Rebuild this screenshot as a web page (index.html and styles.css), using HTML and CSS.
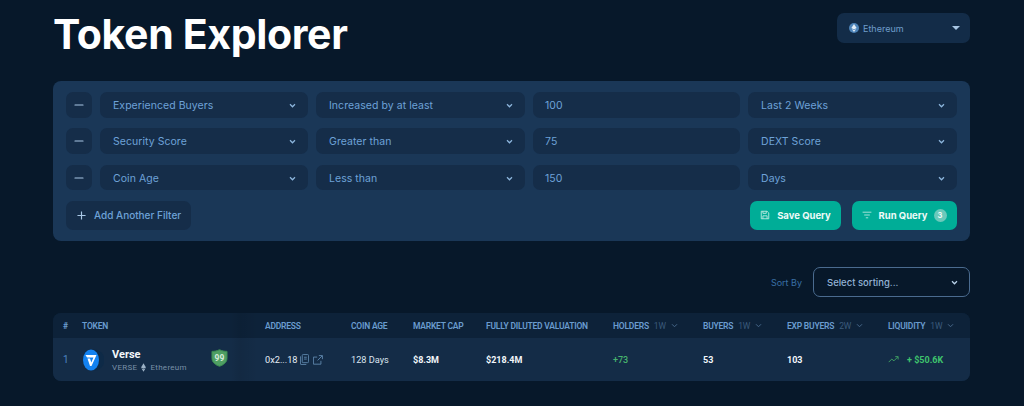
FILE: index.html
```html
<!DOCTYPE html>
<html lang="en">
<head>
<meta charset="utf-8">
<title>Token Explorer</title>
<link rel="stylesheet" href="styles.css">
</head>
<body>
<main class="page">
  <header class="top">
    <h1>Token Explorer</h1>
    <div class="chain">
      <svg class="eth" viewBox="0 0 10 10" width="10" height="10"><circle cx="5" cy="5" r="5" fill="#4d83b8"/><path d="M5 1 7.600 5 5 6.500 2.400 5Z" fill="#e4eef7"/><path d="M5 7.200 7.200 5.900 5 9 2.800 5.900Z" fill="#e4eef7"/></svg>
      <span class="chain-name">Ethereum</span>
      <span class="caret"></span>
    </div>
  </header>

  <section class="filters">
    <div class="row">
      <button class="minus"><svg viewBox="0 0 10 2" width="10" height="2"><path d="M1 1h8" stroke="#a9c8e6" stroke-width="1.200" stroke-linecap="round"/></svg></button>
      <div class="field sel"><span>Experienced Buyers</span><svg class="chev" viewBox="0 0 8 6" width="7" height="5"><path d="M1 1.500 4 4.500 7 1.500" fill="none" stroke="#8db6dd" stroke-width="1.500"/></svg></div>
      <div class="field sel"><span>Increased by at least</span><svg class="chev" viewBox="0 0 8 6" width="7" height="5"><path d="M1 1.500 4 4.500 7 1.500" fill="none" stroke="#8db6dd" stroke-width="1.500"/></svg></div>
      <div class="field num"><span>100</span></div>
      <div class="field sel"><span>Last 2 Weeks</span><svg class="chev" viewBox="0 0 8 6" width="7" height="5"><path d="M1 1.500 4 4.500 7 1.500" fill="none" stroke="#8db6dd" stroke-width="1.500"/></svg></div>
    </div>
    <div class="row">
      <button class="minus"><svg viewBox="0 0 10 2" width="10" height="2"><path d="M1 1h8" stroke="#a9c8e6" stroke-width="1.200" stroke-linecap="round"/></svg></button>
      <div class="field sel"><span>Security Score</span><svg class="chev" viewBox="0 0 8 6" width="7" height="5"><path d="M1 1.500 4 4.500 7 1.500" fill="none" stroke="#8db6dd" stroke-width="1.500"/></svg></div>
      <div class="field sel"><span>Greater than</span><svg class="chev" viewBox="0 0 8 6" width="7" height="5"><path d="M1 1.500 4 4.500 7 1.500" fill="none" stroke="#8db6dd" stroke-width="1.500"/></svg></div>
      <div class="field num"><span>75</span></div>
      <div class="field sel"><span>DEXT Score</span><svg class="chev" viewBox="0 0 8 6" width="7" height="5"><path d="M1 1.500 4 4.500 7 1.500" fill="none" stroke="#8db6dd" stroke-width="1.500"/></svg></div>
    </div>
    <div class="row">
      <button class="minus"><svg viewBox="0 0 10 2" width="10" height="2"><path d="M1 1h8" stroke="#a9c8e6" stroke-width="1.200" stroke-linecap="round"/></svg></button>
      <div class="field sel"><span>Coin Age</span><svg class="chev" viewBox="0 0 8 6" width="7" height="5"><path d="M1 1.500 4 4.500 7 1.500" fill="none" stroke="#8db6dd" stroke-width="1.500"/></svg></div>
      <div class="field sel"><span>Less than</span><svg class="chev" viewBox="0 0 8 6" width="7" height="5"><path d="M1 1.500 4 4.500 7 1.500" fill="none" stroke="#8db6dd" stroke-width="1.500"/></svg></div>
      <div class="field num"><span>150</span></div>
      <div class="field sel"><span>Days</span><svg class="chev" viewBox="0 0 8 6" width="7" height="5"><path d="M1 1.500 4 4.500 7 1.500" fill="none" stroke="#8db6dd" stroke-width="1.500"/></svg></div>
    </div>
    <div class="actions">
      <button class="add"><svg viewBox="0 0 10 10" width="9" height="9"><path d="M5 .5v9M.5 5h9" stroke="#a9c8e6" stroke-width="1.300"/></svg><span>Add Another Filter</span></button>
      <div class="buttons">
        <button class="cta save"><svg viewBox="0 0 12 12" width="10" height="10" fill="none" stroke="#cdeee7" stroke-width="1"><path d="M1.500 1.500h7l2 2v7h-9z"/><path d="M3.500 1.500v2.500h4v-2.500M3.500 10.500v-3.500h5v3.500"/></svg><span>Save Query</span></button>
        <button class="cta run"><svg viewBox="0 0 12 10" width="10" height="8" fill="none" stroke="#cdeee7" stroke-width="1"><path d="M.5 1.500h11M2.500 5h7M4.500 8.500h3"/></svg><span>Run Query</span><span class="badge">3</span></button>
      </div>
    </div>
  </section>

  <div class="sort">
    <span class="sort-label">Sort By</span>
    <div class="sort-box"><span>Select sorting...</span><svg viewBox="0 0 8 6" width="7" height="5"><path d="M1 1.500 4 4.500 7 1.500" fill="none" stroke="#b9d2ea" stroke-width="1.500"/></svg></div>
  </div>

  <section class="table">
    <div class="grid head">
      <span class="hash">#</span>
      <span>TOKEN</span>
      <span>ADDRESS</span>
      <span>COIN AGE</span>
      <span>MARKET CAP</span>
      <span>FULLY DILUTED VALUATION</span>
      <span class="hcell">HOLDERS <i>1W</i><svg viewBox="0 0 8 6" width="7" height="5"><path d="M1 1.500 4 4.500 7 1.500" fill="none" stroke="#47688a" stroke-width="1.200"/></svg></span>
      <span class="hcell">BUYERS <i>1W</i><svg viewBox="0 0 8 6" width="7" height="5"><path d="M1 1.500 4 4.500 7 1.500" fill="none" stroke="#47688a" stroke-width="1.200"/></svg></span>
      <span class="hcell">EXP BUYERS <i>2W</i><svg viewBox="0 0 8 6" width="7" height="5"><path d="M1 1.500 4 4.500 7 1.500" fill="none" stroke="#47688a" stroke-width="1.200"/></svg></span>
      <span class="hcell">LIQUIDITY <i>1W</i><svg viewBox="0 0 8 6" width="7" height="5"><path d="M1 1.500 4 4.500 7 1.500" fill="none" stroke="#47688a" stroke-width="1.200"/></svg></span>
    </div>
    <div class="grid body">
      <span class="rank">1</span>
      <div class="token">
        <svg class="logo" viewBox="0 0 22 22" width="22" height="22"><circle cx="12" cy="11" r="10.500" fill="#0e2a47"/><ellipse cx="9" cy="11" rx="8" ry="10.500" fill="#1482f0"/><path d="M3.500 6 14.500 6 9.500 17 8 17 5.500 9.500 8 9.500 9.300 13.500 11.500 8.500 5 8.500Z" fill="#fff"/></svg>
        <div class="token-text">
          <strong>Verse</strong>
          <span class="sub">VERSE <svg viewBox="0 0 6 10" width="5" height="9"><path d="M3 0 6 5 3 6.600 0 5Z" fill="#9db2c6"/><path d="M3 7.200 5.600 5.800 3 10 .4 5.800Z" fill="#9db2c6"/></svg> Ethereum</span>
        </div>
        <div class="shield"><svg viewBox="0 0 18 19" width="17" height="18"><path d="M1 2.500C4 2.500 6.500 1.800 9 .7 11.500 1.800 14 2.500 17 2.500V10C17 14 13 17 9 18.300 5 17 1 14 1 10Z" fill="#4f9f63" stroke="#3a8a52"/></svg><span>99</span></div>
      </div>
      <div class="addr">0x2...18
        <svg viewBox="0 0 10 12" width="9" height="11" fill="none" stroke="#5e87ad" stroke-width="1"><rect x="2.500" y=".5" width="7" height="9" rx="1"/><path d="M.5 2.500v8.500a.5.5 0 0 0 .5.5h6"/><path d="M4.500 3.500h3M4.500 5.500h3"/></svg>
        <svg class="ext" viewBox="0 0 12 12" width="10" height="10" fill="none" stroke="#5e87ad" stroke-width="1.100"><path d="M9.500 7v4h-9V2.500H5M7 .7h4.300V5M11 1 5.500 6.500"/></svg>
      </div>
      <span class="plain">128 Days</span>
      <strong>$8.3M</strong>
      <strong>$218.4M</strong>
      <span class="green">+73</span>
      <strong>53</strong>
      <strong>103</strong>
      <div class="liq">
        <svg viewBox="0 0 12 8" width="11" height="7" fill="none" stroke="#3f9f63" stroke-width="1.100"><path d="M.5 7 4 3.500 6.500 5.500 11 1M8 .7h3.300V4"/></svg>
        <span class="green-strong">+ $50.6K</span>
      </div>
    </div>
  </section>
</main>
</body>
</html>
```

FILE: styles.css
```css
* { box-sizing: border-box; }
html, body { margin: 0; height: 100%; }
body {
  background: #07182a;
  font-family: "Inter", "Liberation Sans", sans-serif;
  color: #6fa0d4;
  overflow: hidden;
}
button { font: inherit; border: 0; color: inherit; padding: 0; }
.page { width: 917px; margin-left: 53px; }

.top { display: flex; justify-content: space-between; height: 81px; }
h1 { margin: 9px 0 0; font-size: 41px; line-height: 50px; font-weight: 700; color: #fff; letter-spacing: -.35px; }
.chain {
  margin-top: 13px; width: 133px; height: 30px; border-radius: 7px;
  background: #132c48; display: flex; align-items: center; padding: 0 10px 0 12px; font-size: 9px; color: #6f9dcb;
}
.eth { margin-right: 4px; }
.chain-name { flex: 1; }
.caret { width: 0; height: 0; border-left: 4px solid transparent; border-right: 4px solid transparent; border-top: 4px solid #a8c6e4; }

.filters {
  background: #1a3757; border-radius: 8px; height: 160px; padding: 11px 13px;
  display: flex; flex-direction: column; gap: 10.500px;
}
.row { display: grid; grid-template-columns: 26px 208px 209px 207px 209px; gap: 8px; height: 26px; }
.minus { background: #152d49; border-radius: 7px; display: flex; align-items: center; justify-content: center; }
.field {
  background: #152d49; border-radius: 7px; display: flex; align-items: center;
  justify-content: space-between; font-size: 10.500px; letter-spacing: .05px; color: #6ea2d8; padding-top: 1px;
}
.sel { padding-right: 12px; padding-left: 13px; }
.num { padding-right: 12px; padding-left: 12px; }
.actions { display: flex; justify-content: space-between; align-items: flex-start; }
.add {
  width: 125px; height: 29px; background: #152d49; border-radius: 7px; display: flex; align-items: center;
  gap: 8px; padding-left: 11px; font-size: 10px; font-weight: 500; color: #6ea2d8;
}
.buttons { display: flex; gap: 11px; }
.cta {
  height: 29px; border-radius: 7px; background: #00ad97; color: #eefaf7; display: flex; align-items: center;
  justify-content: center; font-size: 9.500px; font-weight: 700;
}
.save { width: 91px; gap: 7px; }
.run { width: 105px; gap: 6px; }
.badge { width: 13px; height: 13px; border-radius: 50%; background: #6cc9bb; font-size: 7.500px; display: flex; align-items: center; justify-content: center; }

.sort { display: flex; justify-content: flex-end; align-items: center; gap: 11px; margin-top: 26px; height: 30px; }
.sort-label { font-size: 9px; color: #3a6fa5; }
.sort-box {
  width: 157px; height: 30px; border: 1px solid #4a6b8f; border-radius: 7px; display: flex; align-items: center;
  justify-content: space-between; padding: 0 11px 0 13px; font-size: 9.500px; font-weight: 500; color: #94b4d6;
}

.table { margin-top: 16px; border-radius: 8px; overflow: hidden; background: #0d2038; font-family: "Roboto", "Liberation Sans", sans-serif; }
.grid {
  display: grid; grid-template-columns: 19px 183px 86px 62px 73px 127px 90px 84px 101px 82px; align-items: center; padding-left: 10px;
  background-image: linear-gradient(90deg, transparent 178px, rgba(0,0,0,.07) 187px, transparent 205px);
}
.head { height: 25px; background-color: #0d2239; font-size: 8.500px; letter-spacing: -.22px; font-weight: 600; color: #6a9ccf; }
.hash { font-weight: 700; }
.hcell { display: flex; align-items: center; gap: 4px; }
.hcell i { font-style: normal; font-weight: 400; color: #3b5a7b; margin-left: 1px; }
.hcell svg { margin-left: 1px; }
.body { height: 43px; background-color: #142c47; font-size: 9px; color: #e7eef6; }
.body strong { font-weight: 700; color: #f2f6fa; }
.rank { color: #4d86c2; font-size: 10px; }
.token { display: flex; align-items: center; position: relative; }
.logo { margin-right: 8px; }
.token-text { display: flex; flex-direction: column; gap: 2px; }
.token-text strong { font-size: 11px; }
.sub { display: flex; align-items: center; gap: 4px; font-size: 8px; color: #7990a8; letter-spacing: .3px; }
.shield { position: absolute; left: 129px; top: 1px; width: 17px; height: 18px; display: flex; align-items: center; justify-content: center; }
.shield svg { position: absolute; inset: 0; }
.shield span { position: relative; font-size: 8.500px; font-weight: 700; color: #d6ebdc; }
.addr { display: flex; align-items: center; gap: 3px; font-size: 9.200px; }
.addr .ext { margin-left: 1px; }
.plain { color: #dbe5ef; font-size: 9.200px; }
.green { color: #47b46d; font-weight: 500; }
.liq { display: flex; align-items: center; gap: 8px; }
.green-strong { color: #3fc46d; font-weight: 700; }
```
